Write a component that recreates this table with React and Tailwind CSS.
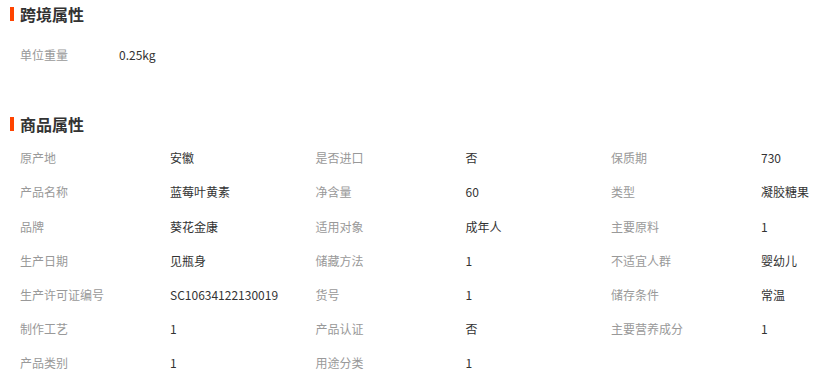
const crossBorder = [["单位重量", "0.25kg"]];

const goods = [
	["原产地", "安徽"],
	["是否进口", "否"],
	["保质期", "730"],
	["产品名称", "蓝莓叶黄素"],
	["净含量", "60"],
	["类型", "凝胶糖果"],
	["品牌", "葵花金康"],
	["适用对象", "成年人"],
	["主要原料", "1"],
	["生产日期", "见瓶身"],
	["储藏方法", "1"],
	["不适宜人群", "婴幼儿"],
	["生产许可证编号", "SC10634122130019"],
	["货号", "1"],
	["储存条件", "常温"],
	["制作工艺", "1"],
	["产品认证", "否"],
	["主要营养成分", "1"],
	["产品类别", "1"],
	["用途分类", "1"],
];

function SectionTitle({ children }) {
	return (
		<div className="flex items-center h-[28px]">
			<span className="ml-[10px] w-[4px] h-[14px] bg-[#ff4400]" />
			<span className="ml-[6px] text-[16px] font-bold text-[#333]">{children}</span>
		</div>
	);
}

function Attr({ label, value, labelWidth = 150 }) {
	return (
		<div className="flex items-center h-[34.2px] w-[295.5px] shrink-0">
			<div className="text-[#999] shrink-0" style={{ width: labelWidth }}>
				{label}
			</div>
			<div className="text-[#333]">{value}</div>
		</div>
	);
}

export default function App() {
	return (
		<div
			className="w-[832px] h-[378px] overflow-hidden bg-white text-[12px]"
			style={{ fontFamily: '"Noto Sans CJK SC", "Noto Sans", sans-serif' }}
		>
			<SectionTitle>跨境属性</SectionTitle>
			<div className="mt-[10px] pl-[20px]">
				{crossBorder.map(([l, v]) => (
					<Attr key={l} label={l} value={v} labelWidth={99} />
				))}
			</div>

			<div className="mt-[38px]">
				<SectionTitle>商品属性</SectionTitle>
			</div>
			<div className="mt-[3px] pl-[20px] grid grid-cols-[295.5px_295.5px_295.5px] w-[908px]">
				{goods.map(([l, v]) => (
					<Attr key={l} label={l} value={v} />
				))}
			</div>
		</div>
	);
}
